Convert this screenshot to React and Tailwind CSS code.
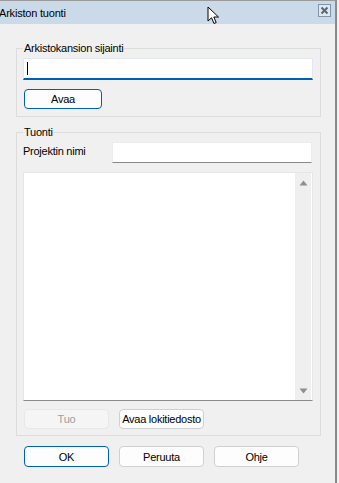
import React from 'react';

const font = { fontFamily: '"Liberation Sans", Arial, sans-serif' };

function Btn({ children, primary, disabled, className = '' }) {
  let look = 'border-[#d0d0d0] bg-[#fdfdfd] text-black';
  if (primary) look = 'border-[#005fb8] bg-[#fdfdfd] text-black';
  if (disabled) look = 'border-[#e8e8e8] bg-[#f5f5f5] text-[#9d9d9d]';
  return (
    <button
      className={`w-[85px] h-[20px] flex items-center justify-center rounded-[4px] border text-[11px] leading-[14px] tracking-[-0.25px] whitespace-nowrap px-0 ${look} ${className}`}
    >
      {children}
    </button>
  );
}

function Cursor() {
  return (
    <svg
      className="absolute left-[207px] top-[5px]"
      width="13"
      height="19"
      viewBox="0 0 13 19"
    >
      <path
        d="M1 1 L1 15 L4.5 11.8 L7 17.5 L9.2 16.5 L6.8 11 L11.5 11 Z"
        fill="#ffffff"
        stroke="#000000"
        strokeWidth="1"
        strokeLinejoin="miter"
      />
    </svg>
  );
}

export default function App() {
  return (
    <div className="w-[339px] h-[483px] bg-[#f0f0f0] overflow-hidden" style={font}>
      <div className="relative w-[337px] h-[483px] border-r-2 border-[#8c8c8c] border-t border-t-[#9a9a9a] bg-[#f0f0f0]">
        {/* title bar */}
        <div className="h-[23px] bg-[#cbdae9] flex items-center justify-between pr-[4px]">
          <span className="text-[11px] leading-[14px] tracking-[-0.2px] text-black -ml-[1px]">
            Arkiston tuonti
          </span>
          <div className="w-[13px] h-[13px] border border-[#8294a8] bg-[#dfe8f1] flex items-center justify-center mt-[-4px]">
            <svg width="9" height="9" viewBox="0 0 9 9">
              <path d="M1.5 1.5 L7.5 7.5 M7.5 1.5 L1.5 7.5" stroke="#56687c" strokeWidth="2" />
            </svg>
          </div>
        </div>
        <Cursor />

        {/* Arkistokansion sijainti */}
        <fieldset className="ml-[16px] mt-[17px] w-[305px] border border-[#dcdcdc] px-[6px] pt-[3px] pb-[7px]">
          <legend className="px-[1px] text-[11px] leading-[14px] tracking-[-0.25px] text-black">
            Arkistokansion sijainti
          </legend>
          <div className="w-[290px] h-[22px] bg-white border border-[#e3e8ee] border-b-2 border-b-[#005fb8] flex items-center pl-[3px]">
            <div className="w-[1px] h-[13px] bg-black" />
          </div>
          <Btn primary className="mt-[9px] !w-[78px] ml-[1px]">
            Avaa
          </Btn>
        </fieldset>

        {/* Tuonti */}
        <fieldset className="ml-[16px] mt-[8px] w-[305px] border border-[#dcdcdc] px-[6px] pt-[3px] pb-[6px]">
          <legend className="px-[1px] text-[11px] leading-[14px] tracking-[-0.25px] text-black">
            Tuonti
          </legend>
          <div className="flex items-start">
            <span className="w-[89px] pt-[2px] text-[11px] leading-[14px] tracking-[-0.25px] text-black">
              Projektin nimi
            </span>
            <div className="w-[200px] h-[21px] bg-white border border-[#ececec] border-b-[#8a8a8a]" />
          </div>
          <div className="mt-[9px] w-[290px] h-[229px] bg-white border border-[#e6e6e6] border-b-[#8c8c8c] flex justify-end pr-[1px]">
            <div className="w-[16px] h-full bg-[#efefef] flex flex-col items-center justify-between pt-[7px] pb-[6px]">
              <svg width="9" height="6" viewBox="0 0 9 6">
                <path d="M4.5 0.5 L8.5 5.5 L0.5 5.5 Z" fill="#8f8f8f" />
              </svg>
              <svg width="9" height="6" viewBox="0 0 9 6">
                <path d="M0.5 0.5 L8.5 0.5 L4.5 5.5 Z" fill="#8f8f8f" />
              </svg>
            </div>
          </div>
          <div className="mt-[8px] flex gap-[10px] pl-[1px]">
            <Btn disabled>Tuo</Btn>
            <Btn>Avaa lokitiedosto</Btn>
          </div>
        </fieldset>

        {/* dialog buttons */}
        <div className="mt-[10px] pl-[24px] flex gap-[10px]">
          <Btn primary className="!h-[21px]">OK</Btn>
          <Btn className="!h-[21px]">Peruuta</Btn>
          <Btn className="!h-[21px]">Ohje</Btn>
        </div>
      </div>
    </div>
  );
}
